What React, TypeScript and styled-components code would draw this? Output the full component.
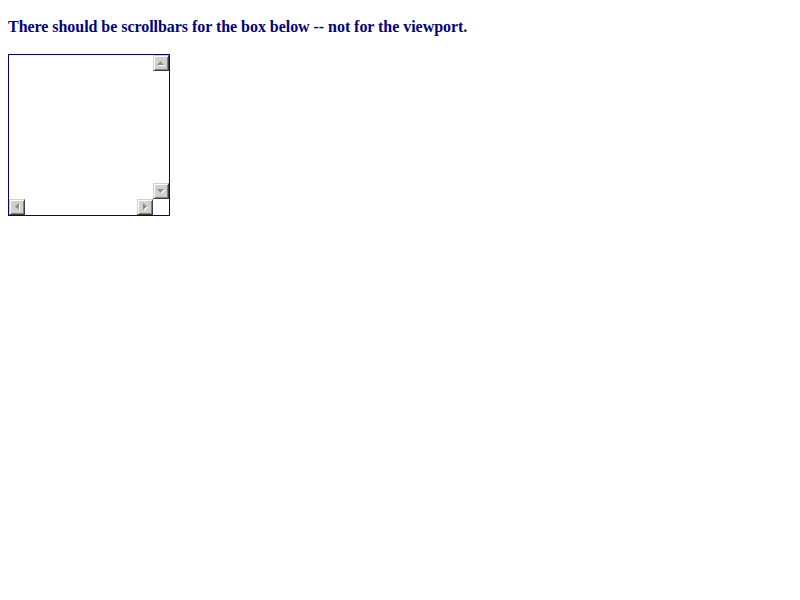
import React from "react";
import styled, { createGlobalStyle } from "styled-components";

const Global = createGlobalStyle`
  html, body { background: #fff; }
  body { margin: 8px; font-family: "Liberation Serif", "Times New Roman", serif; }
`;

const Heading = styled.p`
  margin: 9px 0 18px;
  font-size: 16px;
  line-height: 19px;
  font-weight: bold;
  letter-spacing: -0.045px;
  color: #000080;
`;

const Box = styled.div`
  width: 160px;
  height: 160px;
  border: 1px solid #000080;
  display: grid;
  grid-template-columns: 1fr 16px;
  grid-template-rows: 1fr 16px;
  background: #fff;
`;

const Content = styled.div``;

const VBar = styled.div`
  display: flex;
  flex-direction: column;
  justify-content: space-between;
`;

const HBar = styled.div`
  display: flex;
  justify-content: space-between;
`;

const Corner = styled.div`
  background: #fff;
`;

const Btn = styled.div`
  width: 16px;
  height: 16px;
  box-sizing: border-box;
  background: #d4d0c8;
  border-top: 1px solid #d4d0c8;
  border-left: 1px solid #d4d0c8;
  border-right: 1px solid #404040;
  border-bottom: 1px solid #404040;
  box-shadow: inset 1px 1px 0 #fff, inset -1px -1px 0 #808080;
  display: flex;
  align-items: center;
  justify-content: center;
`;

type Dir = "up" | "down" | "left" | "right";

const arrowPts: Record<Dir, string> = {
  up: "3.5,0 0,4 7,4",
  down: "0,0 7,0 3.5,4",
  left: "4,0 4,7 0,3.5",
  right: "0,0 0,7 4,3.5",
};

const Arrow: React.FC<{ dir: Dir }> = ({ dir }) => {
  const vertical = dir === "up" || dir === "down";
  const w = vertical ? 7 : 4;
  const h = vertical ? 4 : 7;
  return (
    <svg width={w + 1} height={h + 1} viewBox={`0 0 ${w + 1} ${h + 1}`}>
      <polygon points={arrowPts[dir]} fill="#fff" transform="translate(1,1)" />
      <polygon points={arrowPts[dir]} fill="#8c8c8c" />
    </svg>
  );
};

const ScrollButton: React.FC<{ dir: Dir }> = ({ dir }) => (
  <Btn>
    <Arrow dir={dir} />
  </Btn>
);

export default function App() {
  return (
    <>
      <Global />
      <Heading>There should be scrollbars for the box below -- not for the viewport.</Heading>
      <Box>
        <Content />
        <VBar>
          <ScrollButton dir="up" />
          <ScrollButton dir="down" />
        </VBar>
        <HBar>
          <ScrollButton dir="left" />
          <ScrollButton dir="right" />
        </HBar>
        <Corner />
      </Box>
    </>
  );
}
